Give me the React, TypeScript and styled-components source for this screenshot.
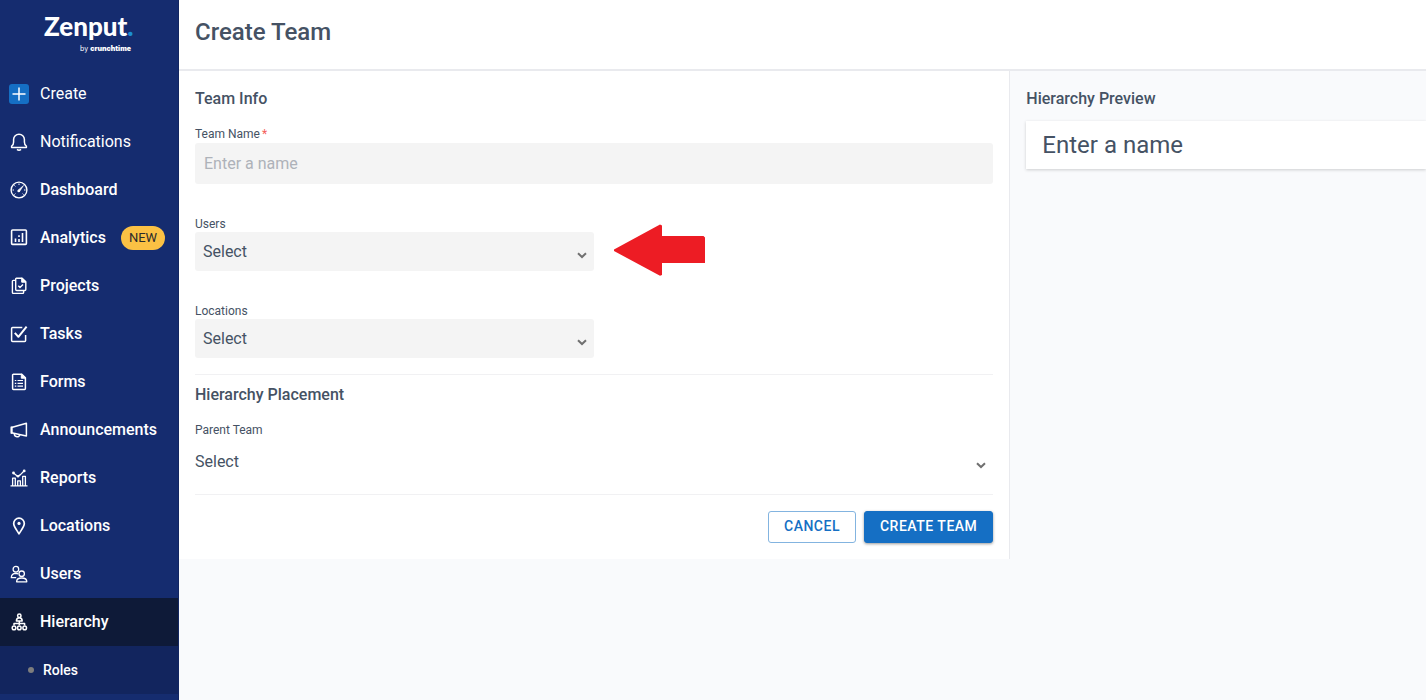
import React, { useState } from 'react';
import styled, { createGlobalStyle, css } from 'styled-components';

const GlobalStyle = createGlobalStyle`
  *, *::before, *::after { box-sizing: border-box; }
  body {
    margin: 0;
    background: #f9fafc;
    color: #455264;
    font-family: Roboto, "Liberation Sans", sans-serif;
    font-size: 16px;
  }
  h1, h2, p, ul { margin: 0; padding: 0; }
  button, input, select { font: inherit; }
`;

const Page = styled.div`
  display: flex;
  min-height: 100vh;
`;

const Sidebar = styled.aside`
  flex: 0 0 179px;
  min-width: 0;
  background: #152c6f;
  border-right: 1px solid #122661;
`;

const Brand = styled.a`
  display: flex;
  flex-direction: column;
  width: 131px;
  height: 70px;
  padding: 12px 0 0 44px;
  color: #fff;
  text-decoration: none;
  white-space: nowrap;
`;

const Wordmark = styled.span`
  font-family: Lato, sans-serif;
  font-size: 26px;
  font-weight: 900;
  line-height: 28px;
`;

const BrandDot = styled.span`
  color: #1b8fd2;
`;

const Byline = styled.span`
  align-self: flex-end;
  font-family: Inter, sans-serif;
  font-size: 7px;
  line-height: 18px;

  strong { font-weight: 900; }
`;

const NavList = styled.ul`
  list-style: none;
`;

const NavLink = styled.a<{ $active?: boolean; $weight?: number }>`
  display: flex;
  align-items: center;
  height: 48px;
  padding-left: 9px;
  gap: 11px;
  color: #fff;
  font-weight: ${(p) => p.$weight ?? 500};
  line-height: 24px;
  text-decoration: none;
  background: ${(p) => (p.$active ? '#0e1a38' : 'transparent')};
`;

const SubLink = styled.a`
  display: flex;
  align-items: center;
  height: 48px;
  padding-left: 28px;
  gap: 9px;
  background: #12255e;
  color: #fff;
  font-size: 14px;
  font-weight: 500;
  line-height: 18px;
  text-decoration: none;

  &::before {
    content: '';
    width: 6px;
    height: 6px;
    border-radius: 50%;
    background: #7d7d7d;
  }
`;

const NewBadge = styled.span`
  margin-left: 4px;
  padding: 0 8px;
  border-radius: 12px;
  background: #fbc144;
  color: #2b2b2b;
  font-size: 13px;
  font-weight: 400;
  line-height: 24px;
`;

const IconSvg = styled.svg`
  flex: none;
  width: 20px;
  height: 20px;
  fill: none;
  stroke: currentColor;
  stroke-width: 1.5;
  stroke-linejoin: round;
`;

const Main = styled.main`
  flex: 1;
  min-width: 0;
`;

const PageHeader = styled.header`
  padding: 16px 16px 21px;
  background: #fff;
  border-bottom: 2px solid #e9eaee;
`;

const PageTitle = styled.h1`
  font-size: 24px;
  font-weight: 500;
  line-height: 32px;
`;

const Columns = styled.div`
  display: grid;
  grid-template-columns: 2fr 1fr;
`;

const TeamForm = styled.form`
  padding: 16px;
  background: #fff;
  border-right: 1px solid #e9eaee;
`;

const SectionTitle = styled.h2`
  font-size: 16px;
  font-weight: 500;
  line-height: 24px;
`;

const Field = styled.div<{ $top: number; $gap?: number; $half?: boolean }>`
  display: flex;
  flex-direction: column;
  gap: ${(p) => p.$gap ?? 0}px;
  width: ${(p) => (p.$half ? '50%' : '100%')};
  margin-top: ${(p) => p.$top}px;
`;

const Label = styled.label`
  font-size: 12px;
  line-height: 16px;
`;

const Required = styled.span`
  margin-left: 2px;
  color: #f4605a;
`;

const controlStyle = css`
  width: 100%;
  border: 0;
  border-radius: 3px;
  background: #f4f4f4;
  color: #455264;
  outline: none;
`;

const TextInput = styled.input`
  ${controlStyle}
  height: 41px;
  padding: 0 9px;

  &::placeholder { color: #aeb2b9; opacity: 1; }
`;

const SelectBox = styled.div`
  display: grid;
  align-items: center;

  > * { grid-area: 1 / 1; }
`;

const Select = styled.select<{ $plain?: boolean }>`
  ${controlStyle}
  appearance: none;
  height: 39px;
  padding: 0 32px 0 ${(p) => (p.$plain ? 0 : 8)}px;
  ${(p) => p.$plain && 'background: transparent;'}
`;

const Chevron = styled.svg`
  justify-self: end;
  width: 10px;
  height: 7px;
  margin: 8px 7px 0 0;
  fill: none;
  stroke: #707070;
  stroke-width: 2;
  pointer-events: none;
`;

const PointedRow = styled.div`
  display: flex;
  align-items: flex-end;
  gap: 20px;
`;

const Arrow = styled.svg`
  flex: none;
  width: 92px;
  height: 52px;
  margin-bottom: -5px;
  fill: #ed1c24;
`;

const Divider = styled.hr<{ $top: number; $bottom: number }>`
  height: 1px;
  margin: ${(p) => p.$top}px 0 ${(p) => p.$bottom}px;
  border: 0;
  background: #f1f1f3;
`;

const Actions = styled.div`
  display: flex;
  justify-content: flex-end;
  gap: 8px;
`;

const Button = styled.button<{ $primary?: boolean }>`
  height: 32px;
  padding: 0 15px 2px;
  border: 1px solid ${(p) => (p.$primary ? '#156fc4' : '#83b4e0')};
  border-radius: 3px;
  background: ${(p) => (p.$primary ? '#156fc4' : '#fff')};
  color: ${(p) => (p.$primary ? '#fff' : '#156fc4')};
  box-shadow: ${(p) => (p.$primary ? '0 1px 3px rgba(0, 0, 0, 0.4)' : 'none')};
  font-size: 14px;
  font-weight: 500;
  line-height: 28px;
  letter-spacing: 0.5px;
  text-transform: uppercase;
  cursor: pointer;
`;

const Preview = styled.section`
  display: flex;
  flex-direction: column;
  gap: 10px;
  padding: 16px 0 16px 16px;
`;

const PreviewCard = styled.p`
  padding: 8px 16px;
  background: #fff;
  box-shadow: 0 1px 3px rgba(0, 0, 0, 0.18);
  font-size: 24px;
  line-height: 32px;
`;

const icons: Record<string, React.ReactNode> = {
  create: (
    <>
      <rect width="20" height="20" rx="3" fill="#156fc4" stroke="none" />
      <path d="M10 3.5v13M3.5 10h13" strokeWidth="1.5" />
    </>
  ),
  bell: (
    <>
      <path d="M2.6 15.4h14.8v-1.2c-1.7-.9-2-2.300-2-4.200V7.600a5.400 5.400 0 0 0-10.800 0V10c0 1.900-.3 3.300-2 4.200z" />
      <path d="M8 17.400c1 .8 3 .8 4 0" strokeWidth="1.6" />
    </>
  ),
  gauge: (
    <>
      <circle cx="10" cy="10" r="7.900" strokeWidth="1.400" />
      <path d="M10 3.500v1.500M3.500 10H5M15 10h1.500M5.400 5.400l1 1M5.400 14.600l1-1M14.600 14.600l-1-1" strokeWidth="1" />
      <path d="M9 10.200l5.500-4.700-4 6.200z" fill="currentColor" strokeWidth=".6" />
      <circle cx="9.700" cy="11" r="1.300" fill="currentColor" stroke="none" />
    </>
  ),
  analytics: (
    <>
      <rect x="2.600" y="2" width="14.800" height="14.400" rx="1" strokeWidth="1.600" />
      <path d="M6.500 10.500V14M10 11v3M10 7.300v1.800M13.500 5v9" strokeWidth="1.600" />
    </>
  ),
  projects: (
    <g strokeWidth="1.400">
      <path d="M7.300 2.200h5.900l3.600 3.600v7.700a1 1 0 0 1-1 1H7.700a1 1 0 0 1-1-1V2.800z" />
      <path d="M12.700 2v4.200h4.200z" fill="currentColor" strokeWidth="1" />
      <path d="M6.300 4.400H4.200a.8.8 0 0 0-.8.8v11.400a.8.8 0 0 0 .8.8h9.600a.8.8 0 0 0 .8-.8v-2M9.300 9.800l1.700 1.700L14 8.500" />
    </g>
  ),
  tasks: (
    <>
      <path d="M13.300 3.400H3.600a1 1 0 0 0-1 1v12a1 1 0 0 0 1 1h12a1 1 0 0 0 1-1V11" />
      <path d="M5.800 8.800l3.600 4L17.600 2.600" strokeWidth="2" />
    </>
  ),
  forms: (
    <>
      <path d="M4.300 2.200h8.500l3.600 3.600v10.800a.8.8 0 0 1-.8.8H4.400a.8.8 0 0 1-.8-.8V2.800z" />
      <path d="M12.300 2v4.200h4.200z" fill="currentColor" strokeWidth="1" />
      <path d="M5.800 8.500h1.500M5.800 11.300h1.500M5.800 14.100h1.500M8.500 8.500H14M8.500 11.300H14M8.500 14.100H14" strokeWidth="1.200" />
    </>
  ),
  megaphone: (
    <>
      <path d="M2.500 7.500L17.400 3.300v12.800L2.500 12.800z" />
      <path d="M5.300 13.500c-.2 4 5.300 4.200 5.400 1.200" />
      <path d="M2.600 6.500v7.300" strokeWidth="2" />
    </>
  ),
  reports: (
    <>
      <path d="M1.500 17.900h17M3.600 17.500v-7.300h2.700v7.300M8.700 17.500v-4.700h2.700v4.700M13.700 17.500V8.300h2.700v9.200" strokeWidth="1.300" />
      <path d="M4.500 5l4.300 3.400 2.700-1.800L15 3" strokeWidth="1.300" />
      <g fill="currentColor" stroke="none">
        <circle cx="4.500" cy="5" r="1.400" />
        <circle cx="9" cy="8.300" r="1.300" />
        <circle cx="15.200" cy="2.900" r="1.400" />
      </g>
    </>
  ),
  pin: (
    <>
      <path d="M10 17.800C7.500 13.700 4.700 10.500 4.700 7.500a5.300 5.300 0 0 1 10.600 0c0 3-2.800 6.200-5.300 10.300z" strokeWidth="1.700" />
      <circle cx="10" cy="7.400" r="1.600" fill="currentColor" stroke="none" />
    </>
  ),
  users: (
    <g strokeWidth="1.300">
      <circle cx="6.900" cy="5.200" r="2.800" />
      <path d="M7.200 13.700H2.300c.1-3 1.400-4.200 4.500-4.300 1 0 1.700.1 2.400.5" />
      <circle cx="12.700" cy="9.700" r="2.700" />
      <path d="M7.600 17.800c0-2.700 1.800-3.800 5.100-3.800s5.100 1.100 5.100 3.800z" />
    </g>
  ),
  hierarchy: (
    <g strokeWidth="1.500">
      <circle cx="10.300" cy="3.700" r="1.700" />
      <path d="M7.400 9c0-2.200 1-3.300 2.900-3.300s2.900 1.100 2.900 3.300zM10.300 9v4M5 13.300v-1.800h10.600v1.800" />
      <circle cx="5" cy="15.900" r="1.800" />
      <circle cx="10.300" cy="15.900" r="1.800" />
      <circle cx="15.700" cy="15.900" r="1.800" />
    </g>
  ),
};

interface NavEntry {
  label: string;
  icon: string;
  weight?: number;
  isNew?: boolean;
  active?: boolean;
}

const navEntries: NavEntry[] = [
  { label: 'Create', icon: 'create', weight: 400 },
  { label: 'Notifications', icon: 'bell', weight: 400 },
  { label: 'Dashboard', icon: 'gauge' },
  { label: 'Analytics', icon: 'analytics', isNew: true },
  { label: 'Projects', icon: 'projects' },
  { label: 'Tasks', icon: 'tasks' },
  { label: 'Forms', icon: 'forms' },
  { label: 'Announcements', icon: 'megaphone' },
  { label: 'Reports', icon: 'reports' },
  { label: 'Locations', icon: 'pin' },
  { label: 'Users', icon: 'users' },
  { label: 'Hierarchy', icon: 'hierarchy', active: true },
];

function SelectControl({ id, plain }: { id: string; plain?: boolean }) {
  return (
    <SelectBox>
      <Select id={id} $plain={plain}>
        <option>Select</option>
      </Select>
      <Chevron viewBox="0 0 10 7" aria-hidden="true">
        <path d="M1 1.200l4 3.800 4-3.800" />
      </Chevron>
    </SelectBox>
  );
}

export default function App() {
  const [name, setName] = useState('');

  return (
    <>
      <GlobalStyle />
      <Page>
        <Sidebar>
          <Brand href="#">
            <Wordmark>
              Zenput<BrandDot>.</BrandDot>
            </Wordmark>
            <Byline>
              by <strong>crunchtime</strong>
            </Byline>
          </Brand>
          <nav>
            <NavList>
              {navEntries.map((entry) => (
                <li key={entry.label}>
                  <NavLink href="#" $active={entry.active} $weight={entry.weight}>
                    <IconSvg viewBox="0 0 20 20" aria-hidden="true">
                      {icons[entry.icon]}
                    </IconSvg>
                    {entry.label}
                    {entry.isNew && <NewBadge>NEW</NewBadge>}
                  </NavLink>
                </li>
              ))}
              <li>
                <SubLink href="#">Roles</SubLink>
              </li>
            </NavList>
          </nav>
        </Sidebar>
        <Main>
          <PageHeader>
            <PageTitle>Create Team</PageTitle>
          </PageHeader>
          <Columns>
            <TeamForm onSubmit={(e) => e.preventDefault()}>
              <SectionTitle>Team Info</SectionTitle>
              <Field $top={15} $gap={1}>
                <Label htmlFor="team-name">
                  Team Name<Required>*</Required>
                </Label>
                <TextInput
                  id="team-name"
                  placeholder="Enter a name"
                  value={name}
                  onChange={(e) => setName(e.target.value)}
                />
              </Field>
              <PointedRow>
                <Field $top={32} $half>
                  <Label htmlFor="team-users">Users</Label>
                  <SelectControl id="team-users" />
                </Field>
                <Arrow viewBox="0 0 92 52" aria-hidden="true">
                  <path d="M0 25.500L46 0.500l2 1v10.500h41.500l1.500 1.500V39H48v12l-2 .800L0 27z" />
                </Arrow>
              </PointedRow>
              <Field $top={32} $half>
                <Label htmlFor="team-locations">Locations</Label>
                <SelectControl id="team-locations" />
              </Field>
              <Divider $top={16} $bottom={8} />
              <SectionTitle>Hierarchy Placement</SectionTitle>
              <Field $top={15} $gap={4}>
                <Label htmlFor="team-parent">Parent Team</Label>
                <SelectControl id="team-parent" plain />
              </Field>
              <Divider $top={13} $bottom={16} />
              <Actions>
                <Button type="button">Cancel</Button>
                <Button type="submit" $primary>
                  Create Team
                </Button>
              </Actions>
            </TeamForm>
            <Preview>
              <SectionTitle>Hierarchy Preview</SectionTitle>
              <PreviewCard>{name || 'Enter a name'}</PreviewCard>
            </Preview>
          </Columns>
        </Main>
      </Page>
    </>
  );
}
